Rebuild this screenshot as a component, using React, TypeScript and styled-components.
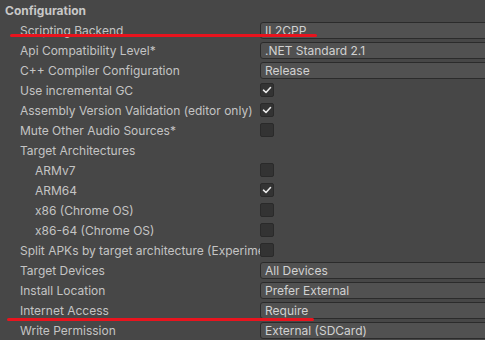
import React from "react";
import styled, { createGlobalStyle } from "styled-components";

const Global = createGlobalStyle`
  html, body { margin: 0; padding: 0; background: #474747; overflow: hidden; }
  body { font-family: Inter, "Noto Sans", "Liberation Sans", sans-serif; }
`;

const Panel = styled.div`
  position: relative;
  width: 485px;
  height: 340px;
  background: #474747;
  overflow: hidden;
`;

const Header = styled.div`
  height: 20px;
  display: flex;
  align-items: center;
  padding-left: 5px;
  font-size: 12px;
  font-weight: 700;
  color: #c8c8c8;
`;

const Row = styled.div`
  height: 20px;
  display: grid;
  grid-template-columns: 260px 1fr;
  align-items: center;
`;

const Label = styled.div<{ $indent?: boolean }>`
  padding-left: ${(p) => (p.$indent ? 35 : 20)}px;
  font-size: 12px;
  color: #c4c4c4;
  white-space: nowrap;
  overflow: hidden;
`;

const Dropdown = styled.div`
  height: 17px;
  box-sizing: border-box;
  width: 260px;
  border: 1px solid #2b2b2b;
  border-radius: 3px;
  background: #515151;
  display: flex;
  align-items: center;
  padding-left: 4px;
  font-size: 12px;
  color: #d2d2d2;
  white-space: nowrap;
`;

const Box = styled.div`
  width: 14px;
  height: 14px;
  box-sizing: border-box;
  border: 1px solid #2a2a2a;
  border-radius: 2px;
  background: #333333;
  display: flex;
  align-items: center;
  justify-content: center;
`;

const Mark = styled.div`
  position: absolute;
  height: 3px;
  border-radius: 2px;
  background: #e8141e;
`;

const Check = () => (
  <svg width="10" height="10" viewBox="0 0 10 10">
    <path d="M1.5 5.2 L4 7.5 L8.5 2.5" fill="none" stroke="#e8e8e8" strokeWidth="1.6" strokeLinecap="round" strokeLinejoin="round" />
  </svg>
);

type Item =
  | { label: string; indent?: boolean; kind: "drop"; value: string }
  | { label: string; indent?: boolean; kind: "check"; checked: boolean }
  | { label: string; indent?: boolean; kind: "none" };

const items: Item[] = [
  { label: "Scripting Backend", kind: "drop", value: "IL2CPP" },
  { label: "Api Compatibility Level*", kind: "drop", value: ".NET Standard 2.1" },
  { label: "C++ Compiler Configuration", kind: "drop", value: "Release" },
  { label: "Use incremental GC", kind: "check", checked: true },
  { label: "Assembly Version Validation (editor only)", kind: "check", checked: true },
  { label: "Mute Other Audio Sources*", kind: "check", checked: false },
  { label: "Target Architectures", kind: "none" },
  { label: "ARMv7", indent: true, kind: "check", checked: false },
  { label: "ARM64", indent: true, kind: "check", checked: true },
  { label: "x86 (Chrome OS)", indent: true, kind: "check", checked: false },
  { label: "x86-64 (Chrome OS)", indent: true, kind: "check", checked: false },
  { label: "Split APKs by target architecture (Experimental)", kind: "check", checked: false },
  { label: "Target Devices", kind: "drop", value: "All Devices" },
  { label: "Install Location", kind: "drop", value: "Prefer External" },
  { label: "Internet Access", kind: "drop", value: "Require" },
  { label: "Write Permission", kind: "drop", value: "External (SDCard)" },
];

export default function App() {
  return (
    <Panel>
      <Global />
      <Header>Configuration</Header>
      {items.map((it) => (
        <Row key={it.label}>
          <Label $indent={it.indent}>{it.label}</Label>
          <div>
            {it.kind === "drop" && <Dropdown>{it.value}</Dropdown>}
            {it.kind === "check" && <Box>{it.checked && <Check />}</Box>}
          </div>
        </Row>
      ))}
      <Mark style={{ left: 10, top: 34, width: 307 }} />
      <Mark style={{ left: 7, top: 318, width: 307 }} />
    </Panel>
  );
}
